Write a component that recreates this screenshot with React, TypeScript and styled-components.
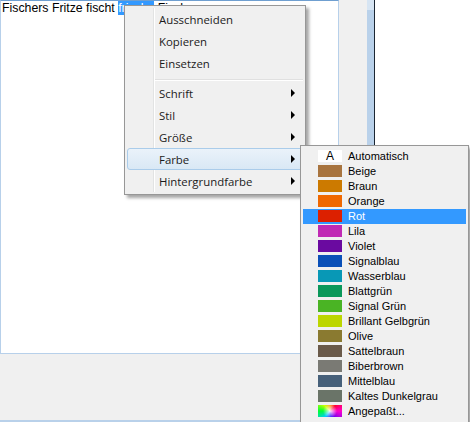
import styled, { createGlobalStyle, css } from "styled-components";

const GlobalStyle = createGlobalStyle`
  html, body {
    margin: 0;
    padding: 0;
    background: #ffffff;
  }
  #root {
    width: 470px;
    height: 422px;
  }
`;

const Desktop = styled.div`
  position: relative;
  display: flex;
  width: 470px;
  height: 422px;
  overflow: hidden;
`;

/* background window with the editor */
const AppWindow = styled.div`
  display: flex;
  width: 375px;
  height: 100%;
`;
const WindowBody = styled.div`
  display: flex;
  flex-direction: column;
  width: 367px;
`;
const Client = styled.div`
  flex: 1;
  display: flex;
  align-items: flex-start;
  background: #f0f0f0;
`;
const BottomFrame = styled.div`
  height: 2px;
  background: #b9d1ea;
`;
const SideFrame = styled.div`
  width: 7px;
  background: linear-gradient(#d7e5f3 0, #d7e5f3 10px, #b9d1ea 10px);
  border-right: 1px solid #1b2633;
`;
const OtherWindow = styled.div`
  flex: 1;
  background: #ffffff;
`;

const Editor = styled.div`
  box-sizing: border-box;
  width: 339px;
  height: 354px;
  background: #ffffff;
  border: 1px solid #b7d0ea;
  border-top-color: #6f9fd0;
  padding: 0 0 0 1px;
  font-family: "Liberation Sans", Arial, sans-serif;
  font-size: 12.3px;
  line-height: 15px;
  color: #000000;
  white-space: nowrap;
`;
const Selection = styled.span`
  background: #3399ff;
  color: #ffffff;
`;

/* context menu, windows 7 style */
const ContextMenu = styled.div`
  position: absolute;
  left: 124px;
  top: 5px;
  width: 182px;
  box-sizing: border-box;
  padding: 2px;
  background: #f0f0f0;
  border: 1px solid #979797;
  box-shadow: 3px 3px 3px rgba(0, 0, 0, 0.35);
  font-family: "Open Sans", "Noto Sans", sans-serif;
  font-size: 11.4px;
  color: #1b1b1b;

  &::before {
    content: "";
    position: absolute;
    left: 28px;
    top: 2px;
    bottom: 2px;
    width: 1px;
    background: #e2e3e3;
    border-right: 1px solid #ffffff;
  }
`;
const MenuItem = styled.div<{ $active?: boolean }>`
  position: relative;
  box-sizing: border-box;
  display: flex;
  align-items: center;
  height: 22px;
  padding-left: 31px;
  border: 1px solid transparent;
  border-radius: 3px;
  ${(p) =>
    p.$active &&
    css`
      border-color: #aaccea;
      background: linear-gradient(#eaf2fa, #d9e8f5);
    `}
`;
const Arrow = styled.span`
  margin-left: auto;
  margin-right: 7px;
  width: 0;
  height: 0;
  border-left: 4px solid #000000;
  border-top: 4px solid transparent;
  border-bottom: 4px solid transparent;
`;
const Separator = styled.div`
  margin: 5px 0 1px 28px;
  height: 1px;
  background: #e0e0e0;
  border-bottom: 1px solid #ffffff;
`;

/* colour palette submenu */
const ColorMenu = styled.div`
  position: absolute;
  left: 300px;
  top: 145px;
  width: 169px;
  box-sizing: border-box;
  padding: 3px 2px;
  background: #f0f0f0;
  border: 1px solid #979797;
  box-shadow: 3px 3px 3px rgba(0, 0, 0, 0.35);
  font-family: "Liberation Sans", Arial, sans-serif;
  font-size: 11px;
  color: #000000;
`;
const ColorRow = styled.div<{ $active?: boolean }>`
  display: flex;
  align-items: flex-start;
  height: 15px;
  background: ${(p) => (p.$active ? "#3399ff" : "transparent")};
  color: ${(p) => (p.$active ? "#ffffff" : "#000000")};
`;
const Swatch = styled.span<{ $fill: string }>`
  display: flex;
  align-items: center;
  justify-content: center;
  width: 24px;
  height: 12px;
  margin: 1px 6px 0 15px;
  background: ${(p) => p.$fill};
  font-size: 12px;
  line-height: 12px;
  color: #000000;
`;
const ColorLabel = styled.span`
  line-height: 15px;
`;

const RAINBOW =
  "radial-gradient(circle, rgba(255,255,255,0.9) 0, rgba(255,255,255,0) 7px), conic-gradient(#ff9900, #ff0033, #ff00cc 90deg, #3300ff 170deg, #00ccff 220deg, #00ff33 270deg, #ccff00 315deg, #ff9900)";

const colors: { name: string; fill: string }[] = [
  { name: "Automatisch", fill: "#ffffff" },
  { name: "Beige", fill: "#a8743f" },
  { name: "Braun", fill: "#cc7a00" },
  { name: "Orange", fill: "#f06800" },
  { name: "Rot", fill: "#dc2000" },
  { name: "Lila", fill: "#c02ab4" },
  { name: "Violet", fill: "#6a0aa0" },
  { name: "Signalblau", fill: "#0a50b8" },
  { name: "Wasserblau", fill: "#0898b6" },
  { name: "Blattgrün", fill: "#0a985a" },
  { name: "Signal Grün", fill: "#4ab424" },
  { name: "Brillant Gelbgrün", fill: "#bcd600" },
  { name: "Olive", fill: "#8a7a30" },
  { name: "Sattelbraun", fill: "#6a5a4a" },
  { name: "Biberbrown", fill: "#7a7a74" },
  { name: "Mittelblau", fill: "#46607a" },
  { name: "Kaltes Dunkelgrau", fill: "#6a7468" },
  { name: "Angepaßt...", fill: RAINBOW },
];

const menuTop = ["Ausschneiden", "Kopieren", "Einsetzen"];
const menuSub = ["Schrift", "Stil", "Größe", "Farbe", "Hintergrundfarbe"];

export default function App() {
  return (
    <>
      <GlobalStyle />
      <Desktop>
        <AppWindow>
          <WindowBody>
            <Client>
              <Editor>
                Fischers Fritze fischt <Selection>frische</Selection> Fische
              </Editor>
            </Client>
            <BottomFrame />
          </WindowBody>
          <SideFrame />
        </AppWindow>
        <OtherWindow />

        <ContextMenu>
          {menuTop.map((label) => (
            <MenuItem key={label}>{label}</MenuItem>
          ))}
          <Separator />
          {menuSub.map((label) => (
            <MenuItem key={label} $active={label === "Farbe"}>
              {label}
              <Arrow />
            </MenuItem>
          ))}
        </ContextMenu>

        <ColorMenu>
          {colors.map((c) => (
            <ColorRow key={c.name} $active={c.name === "Rot"}>
              <Swatch $fill={c.fill}>{c.name === "Automatisch" ? "A" : null}</Swatch>
              <ColorLabel>{c.name}</ColorLabel>
            </ColorRow>
          ))}
        </ColorMenu>
      </Desktop>
    </>
  );
}
